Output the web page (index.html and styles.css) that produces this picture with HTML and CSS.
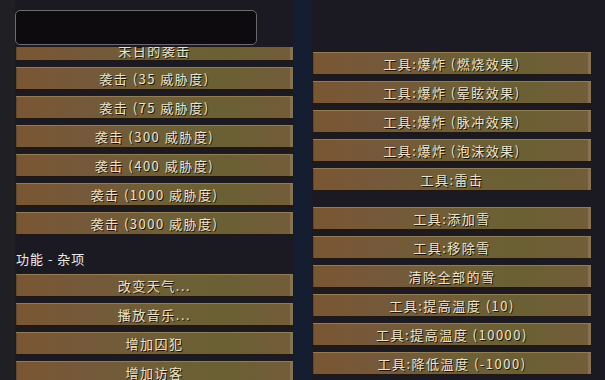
FILE: index.html
```html
<!DOCTYPE html>
<html lang="zh">
<head>
  <meta charset="UTF-8">
  <title>工具菜单</title>
  <link rel="stylesheet" href="styles.css">
</head>
<body>
  <div class="screen">
    <!-- Left column: search + scrolled list -->
    <div class="col col-left">
      <div class="search"></div>
      <div class="list-clip">
        <div class="list list-scrolled">
          <div class="btn">末日的袭击</div>
          <div class="btn">袭击 (35 威胁度)</div>
          <div class="btn">袭击 (75 威胁度)</div>
          <div class="btn">袭击 (300 威胁度)</div>
          <div class="btn">袭击 (400 威胁度)</div>
          <div class="btn">袭击 (1000 威胁度)</div>
          <div class="btn">袭击 (3000 威胁度)</div>
          <div class="section-label">功能 - 杂项</div>
          <div class="btn">改变天气...</div>
          <div class="btn">播放音乐...</div>
          <div class="btn">增加囚犯</div>
          <div class="btn">增加访客</div>
        </div>
      </div>
    </div>

    <!-- Right column: tools -->
    <div class="col col-right">
      <div class="list">
        <div class="btn">工具:爆炸 (燃烧效果)</div>
        <div class="btn">工具:爆炸 (晕眩效果)</div>
        <div class="btn">工具:爆炸 (脉冲效果)</div>
        <div class="btn">工具:爆炸 (泡沫效果)</div>
        <div class="btn">工具:雷击</div>
        <div class="btn btn-group-start">工具:添加雪</div>
        <div class="btn">工具:移除雪</div>
        <div class="btn">清除全部的雪</div>
        <div class="btn">工具:提高温度 (10)</div>
        <div class="btn">工具:提高温度 (10000)</div>
        <div class="btn">工具:降低温度 (-1000)</div>
      </div>
    </div>
  </div>
</body>
</html>
```

FILE: styles.css
```css
/* Global */
body {
  margin: 0;
  background: #1c1b23;
  font-family: "Noto Sans CJK SC", "Noto Sans", sans-serif;
  overflow: hidden;
}
.screen {
  width: 605px;
  height: 380px;
  display: flex;
  gap: 20px;
  background: linear-gradient(90deg, #202024 0, #202024 15px, #1b1a22 15px, #1b1a22 294px, #151d31 294px, #151d31 312px, #1b1a22 312px);
  overflow: hidden;
}
.col {
  display: flex;
  flex-direction: column;
}
.col-left {
  width: 277px;
  padding-left: 16px;
}
.col-right {
  width: 278px;
  padding-top: 52px;
}
/* Search box */
.search {
  margin: 10px 0 0 -1px;
  width: 240px;
  height: 33px;
  background: #0d0b0d;
  border: 1px solid #6b6b6e;
  border-radius: 5px;
  flex-shrink: 0;
}
.list-clip {
  margin-top: 2px;
  flex: 1;
  overflow: hidden;
}
.list {
  display: flex;
  flex-direction: column;
  gap: 5px;
}
.list-scrolled {
  margin-top: -9px;
}
/* Buttons */
.btn {
  height: 24px;
  box-sizing: border-box;
  display: flex;
  align-items: center;
  justify-content: center;
  background: linear-gradient(90deg, #7a5633 0%, #74593a 25%, #6e5f36 55%, #6a6034 75%, #735c3a 100%);
  border-top: 1px solid #907c58;
  border-bottom: 2px solid #24180d;
  box-shadow: inset -3px 0 0 #85724f, inset 1px 0 0 #5d4a2c;
  color: #ece3cb;
  font-size: 13px;
  letter-spacing: 1.5px;
  text-shadow: 1px 1px 0 #1e140a;
  white-space: nowrap;
}
.list-scrolled .btn:first-child {
  padding-top: 2px;
}
.btn-group-start {
  margin-top: 10px;
}
/* Section label */
.section-label {
  padding: 9px 0 2px;
  line-height: 17px;
  color: #ececec;
  font-size: 13px;
  letter-spacing: 1px;
}
```
